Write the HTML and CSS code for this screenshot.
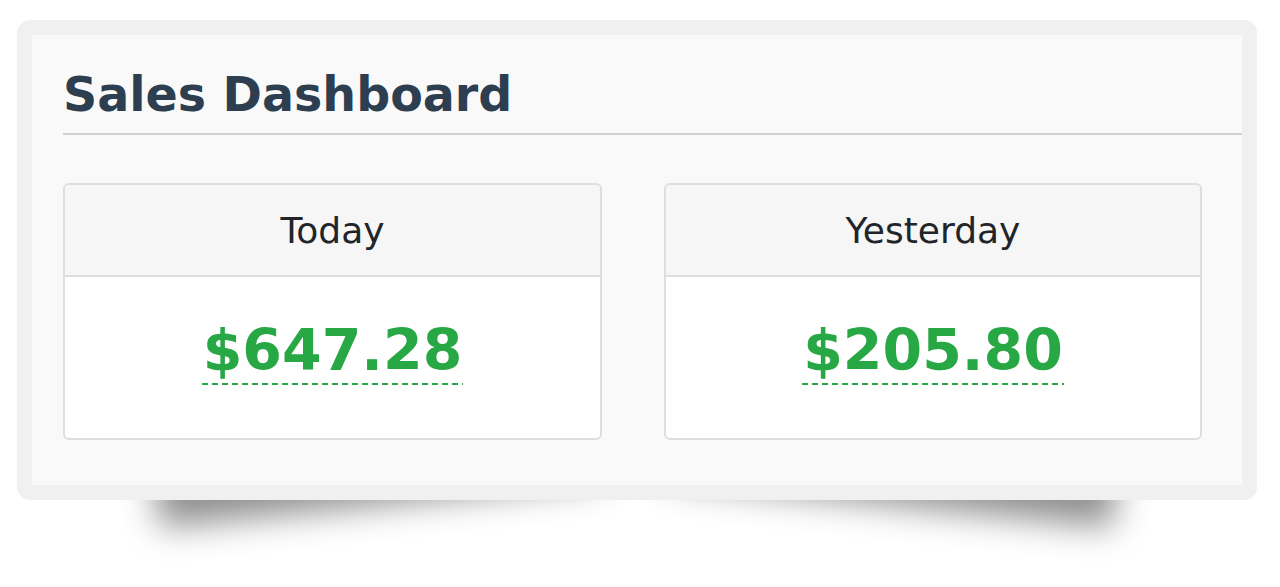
FILE: index.html
```html
<!DOCTYPE html>
<html lang="en">
<head>
<meta charset="utf-8">
<title>Sales Dashboard</title>
<link rel="stylesheet" href="styles.css">
</head>
<body>
  <div class="frame">
    <div class="panel">
      <h1 class="title">Sales Dashboard</h1>
      <div class="cards">
        <div class="card">
          <div class="card-head">Today</div>
          <div class="card-body"><span class="amount">$647.28</span></div>
        </div>
        <div class="card">
          <div class="card-head">Yesterday</div>
          <div class="card-body"><span class="amount">$205.80</span></div>
        </div>
      </div>
    </div>
  </div>
  <div class="lift-shadow" aria-hidden="true"></div>
</body>
</html>
```

FILE: styles.css
```css
html {
  margin: 0;
  padding: 0;
  background: #ffffff;
}

body {
  margin: 0;
  font-family: "DejaVu Sans", Verdana, sans-serif;
  padding: 20px 0 0 17px;
}

.frame {
  width: 1210px;
  padding: 15px;
  background: #f0f0f0;
  border-radius: 13px;
}

.lift-shadow {
  position: relative;
  width: 1240px;
  height: 80px;
  overflow: hidden;
}

.lift-shadow::before,
.lift-shadow::after {
  content: "";
  position: absolute;
  top: -90px;
  height: 60px;
  width: 445px;
  box-shadow: 0 34px 34px rgba(0, 0, 0, 0.45);
}

.lift-shadow::before {
  left: 135px;
  transform: rotate(-6deg);
}

.lift-shadow::after {
  right: 137px;
  transform: rotate(6deg);
}

.panel {
  background: #f9f9f9;
  padding: 0 0 45px 31px;
}

.title {
  margin: 0;
  padding: 32px 0 10px;
  font-size: 47.5px;
  line-height: 56px;
  font-weight: bold;
  color: #2c3e50;
  border-bottom: 2px solid #d2d2ce;
}

.cards {
  display: flex;
  gap: 62px;
  margin-top: 48px;
}

.card {
  width: 539px;
  box-sizing: border-box;
  border: 2px solid #dedede;
  border-radius: 6px;
  background: #ffffff;
  overflow: hidden;
}

.card + .card {
  width: 538px;
}

.card-head {
  height: 90px;
  display: flex;
  align-items: center;
  justify-content: center;
  background: #f6f6f6;
  border-bottom: 2px solid #dedede;
  font-size: 36px;
  color: #212529;
}

.card-body {
  text-align: center;
  padding: 41px 0 53px;
}

.amount {
  display: inline-block;
  font-size: 57px;
  line-height: 65px;
  font-weight: bold;
  color: #28a745;
  padding: 0 1px 2px;
  background-image: repeating-linear-gradient(to right, #28a745 0 6px, transparent 6px 10px);
  background-size: 100% 2px;
  background-position: left bottom;
  background-repeat: no-repeat;
}
```
